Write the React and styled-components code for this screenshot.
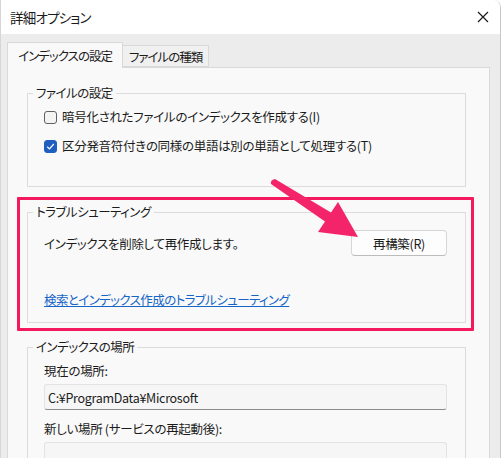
import React from "react";
import styled, { createGlobalStyle } from "styled-components";

const GlobalStyle = createGlobalStyle`
  html, body {
    margin: 0;
    padding: 0;
    background: #ffffff;
  }
  body {
    font-family: "Noto Sans CJK JP", "Noto Sans", sans-serif;
    font-feature-settings: "palt";
    color: #1b1b1b;
  }
`;

const Page = styled.div`
  position: relative;
  width: 501px;
  height: 458px;
  overflow: hidden;
`;

const Window = styled.div`
  display: flex;
  flex-direction: column;
  height: 100%;
  box-sizing: border-box;
  border-left: 1px solid #d6d6d6;
  border-right: 1px solid #c9c9c9;
  border-top-right-radius: 8px;
  overflow: hidden;
`;

const TitleBar = styled.div`
  height: 34px;
  flex-shrink: 0;
  display: flex;
  align-items: center;
  justify-content: space-between;
  padding: 0 11px 0 9px;
  background: #ffffff;
  font-size: 13.5px;
  letter-spacing: -0.8px;
`;

const Body = styled.div`
  flex: 1;
  background: #ececec;
  padding: 8px 10px 0 6px;
`;

const TabRow = styled.div`
  display: flex;
  align-items: flex-end;
  height: 25px;
  font-size: 12.5px;
  letter-spacing: -1px;
`;

const Tab = styled.div`
  box-sizing: border-box;
  height: ${(p) => (p.$active ? "26px" : "22px")};
  width: ${(p) => (p.$active ? "116px" : "86px")};
  display: flex;
  align-items: center;
  justify-content: center;
  background: ${(p) => (p.$active ? "#f9f9f9" : "#f0f0f0")};
  border: 1px solid #d9d9d9;
  border-bottom: ${(p) => (p.$active ? "none" : "1px solid #d9d9d9")};
  border-left: ${(p) => (p.$active ? "1px solid #d9d9d9" : "none")};
  position: relative;
  z-index: ${(p) => (p.$active ? 2 : 1)};
  margin-bottom: ${(p) => (p.$active ? "-1px" : "0")};
  white-space: nowrap;
`;

const Panel = styled.div`
  background: #f9f9f9;
  border: 1px solid #d9d9d9;
  padding: 17px 23px 40px 19px;
  height: 420px;
  box-sizing: border-box;
  display: flex;
  flex-direction: column;
  font-size: 12.5px;
  letter-spacing: -0.3px;
`;

const Group = styled.fieldset`
  margin: ${(p) => p.$top || 0}px 0 0 0;
  padding: 0 ${(p) => p.$right || 16}px ${(p) => p.$bottom || 0}px 16px;
  border: 1px solid #dcdcdc;
  min-width: 0;
`;

const Legend = styled.legend`
  margin-left: -11px;
  padding: 0 3px;
  line-height: 16px;
  font-size: 12.5px;
  letter-spacing: -0.5px;
`;

const GroupBody = styled.div`
  display: flex;
  flex-direction: column;
  gap: ${(p) => p.$gap || 0}px;
  padding-top: ${(p) => p.$top || 0}px;
`;

const CheckRow = styled.label`
  display: flex;
  align-items: center;
  gap: 5px;
  height: 20px;
  line-height: 20px;
`;

const Box = styled.span`
  width: 13px;
  height: 13px;
  box-sizing: border-box;
  border-radius: 3px;
  flex-shrink: 0;
  display: flex;
  align-items: center;
  justify-content: center;
  background: ${(p) => (p.$checked ? "#1f5fbf" : "#f4f4f4")};
  border: 1px solid ${(p) => (p.$checked ? "#1f5fbf" : "#606060")};
`;

const ActionRow = styled.div`
  display: flex;
  align-items: center;
  justify-content: space-between;
  height: 26px;
  margin-top: 10px;
`;

const Button = styled.button`
  width: 96px;
  height: 26px;
  box-sizing: border-box;
  background: #fdfdfd;
  border: 1px solid #d6d6d6;
  border-bottom-color: #bcbcbc;
  border-radius: 4px;
  font-family: inherit;
  font-feature-settings: "palt";
  font-size: 12.5px;
  letter-spacing: -0.3px;
  color: #1b1b1b;
  padding: 0;
`;

const Link = styled.a`
  display: block;
  margin-top: 36px;
  line-height: 16px;
  color: #1565c6;
  text-decoration: underline;
  letter-spacing: -0.6px;
`;

const Label = styled.div`
  line-height: 16px;
  margin-top: ${(p) => p.$top || 0}px;
`;

const Field = styled.div`
  box-sizing: border-box;
  height: 26px;
  margin-top: 5px;
  padding-left: 3px;
  display: flex;
  align-items: center;
  background: #f6f6f6;
  border: 1px solid #e3e3e3;
  border-bottom: 1px solid #8c8c8c;
  border-radius: 3px;
  font-size: 12.5px;
`;

const Highlighted = styled.div`
  position: relative;
  margin-top: 17px;
`;

const RedFrame = styled.div`
  position: absolute;
  top: -7px;
  left: -10px;
  right: -8px;
  bottom: -8px;
  border: 3px solid #f4185f;
  border-radius: 1px;
  pointer-events: none;
`;

const ArrowLayer = styled.svg`
  position: absolute;
  left: 0;
  top: 0;
  pointer-events: none;
`;

const Check = () => (
  <svg width="9" height="9" viewBox="0 0 9 9">
    <path d="M1.2 4.8 L3.5 7 L7.8 2" fill="none" stroke="#fff" strokeWidth="1.2" />
  </svg>
);

const CloseIcon = () => (
  <svg width="12" height="12" viewBox="0 0 12 12">
    <path d="M1 1 L11 11 M11 1 L1 11" stroke="#1b1b1b" strokeWidth="1.2" />
  </svg>
);

export default function App() {
  return (
    <Page>
      <GlobalStyle />
      <Window>
        <TitleBar>
          <span>詳細オプション</span>
          <CloseIcon />
        </TitleBar>
        <Body>
          <TabRow>
            <Tab $active>インデックスの設定</Tab>
            <Tab>ファイルの種類</Tab>
          </TabRow>
          <Panel>
            <Group $bottom={30}>
              <Legend>ファイルの設定</Legend>
              <GroupBody $top={6} $gap={9}>
                <CheckRow>
                  <Box />
                  暗号化されたファイルのインデックスを作成する(I)
                </CheckRow>
                <CheckRow>
                  <Box $checked>
                    <Check />
                  </Box>
                  区分発音符付きの同様の単語は別の単語として処理する(T)
                </CheckRow>
              </GroupBody>
            </Group>

            <Highlighted>
              <Group $right={18} $bottom={14}>
                <Legend>トラブルシューティング</Legend>
                <ActionRow>
                  <span>インデックスを削除して再作成します。</span>
                  <Button>再構築(R)</Button>
                </ActionRow>
                <Link>検索とインデックス作成のトラブルシューティング</Link>
              </Group>
              <RedFrame />
            </Highlighted>

            <Group $top={16} $right={18} $bottom={20}>
              <Legend>インデックスの場所</Legend>
              <Label $top={8}>現在の場所:</Label>
              <Field>C:¥ProgramData¥Microsoft</Field>
              <Label $top={11}>新しい場所 (サービスの再起動後):</Label>
              <Field />
            </Group>
          </Panel>
        </Body>
      </Window>
      <ArrowLayer width="501" height="458" viewBox="0 0 501 458">
        <path
          d="M275 179 L331 212.5 L338 202 L358 237 L318 232 L325 221.5 L271 184 Q270 180 275 179 Z"
          fill="#f4246a"
        />
      </ArrowLayer>
    </Page>
  );
}
